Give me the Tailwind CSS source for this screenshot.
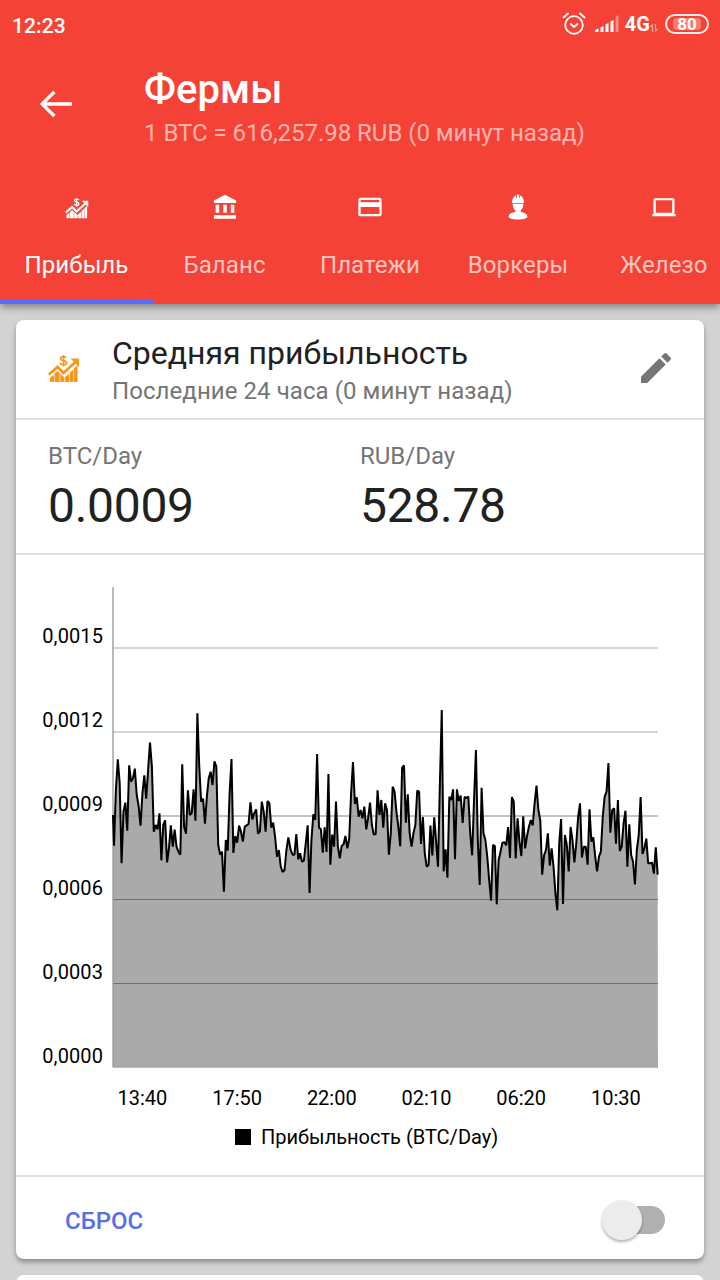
<!DOCTYPE html>
<html lang="ru">
<head>
  <meta charset="UTF-8">
  <title>Фермы</title>
  <script src="https://cdn.jsdelivr.net/npm/@tailwindcss/browser@4"></script>
</head>
<body class="w-[720px] h-[1280px] overflow-hidden bg-[#d3d3d3] font-['Roboto',sans-serif] text-[#212121]">
  <svg class="hidden">
    <symbol id="profit" viewBox="0 0 32 28">
      <path d="M1 19.5 9.5 12l6 6L27.5 7" fill="none" stroke="currentColor" stroke-width="2.8"/>
      <path d="M22.5 3.5H31V12z" fill="currentColor"/>
      <path d="M2 27v-4.500L6 19.500V27zM6.600 27V18.500l2.900-2.500L11.700 18v9zM12.300 27v-8.500l4.200 4V27zM17.100 27v-5l4.300-3.500v8.500zM22 27V17.500l3.500-3.500v13zM26 27V13.500l3.500-3.500v17z" fill="currentColor"/>
      <path d="M18.300 2.800C17.800 1.500 16.700 1.500 15.500 1.500c-1.700 0-2.900.6-2.900 1.900 0 3 6 1.300 6 4.300 0 1.500-1.300 2.200-3.100 2.200-1.600 0-2.800-.5-3.200-2M15.500 0v11.500" fill="none" stroke="currentColor" stroke-width="1.700"/>
    </symbol>
  </svg>

  <header class="relative h-[304px] bg-[#f44336] text-white shadow-[0_3px_8px_rgba(0,0,0,0.4)]">
    <!-- status bar -->
    <div class="flex h-12 items-center justify-between pl-3 pr-[11px]">
      <span class="pt-[3px] text-[21px] font-medium leading-7 tracking-[0.1px]">12:23</span>
      <div class="flex items-center">
        <svg class="mr-[8px] h-6 w-6" viewBox="0 0 24 24" fill="none" stroke="currentColor" stroke-width="1.800" stroke-linecap="round">
          <circle cx="12" cy="13" r="8.800"/>
          <path d="M8.800 12 12 15l3.500-3M1.500 5.500 6 1.500M22.500 5.500 18 1.500"/>
        </svg>
        <svg class="mr-[5px] h-[18px] w-[26px]" viewBox="0 0 26 18" fill="currentColor">
          <path d="M1 17v-2l3.500-1.500V17zM6.500 17v-4.500L9.500 11v6zM11.500 17V9.500L14.500 8v9zM16.500 17V6.500L19.500 5v12z"/>
          <path d="M21.500 17V2l3-2v17z" opacity=".4"/>
        </svg>
        <span class="text-[20px] font-bold leading-none tracking-[0.1px]">4G</span>
        <svg class="mr-[7px] mt-2 h-2 w-2" viewBox="0 0 8 8" fill="none" stroke="currentColor" stroke-width="1.200" opacity=".5">
          <path d="M2.500 8V1L.500 3M5.500 0v7l2-2"/>
        </svg>
        <div class="flex h-5 w-[44px] items-center justify-center rounded-full border-2 border-white/90">
          <span class="flex h-3 w-[28px] items-center justify-center rounded-sm bg-white/30 text-[17px] font-bold leading-none">80</span>
        </div>
      </div>
    </div>

    <!-- toolbar -->
    <div class="flex h-28 items-start pl-9">
      <svg class="mt-9 h-10 w-10" viewBox="0 0 24 24" fill="currentColor"><path d="M21.600 11H6.200l5.600-5.590L10.300 4 2.300 12l8 8 1.500-1.410L6.200 13h15.400z"/></svg>
      <div class="ml-[68px] pt-[18px]">
        <h1 class="text-[40px] font-medium leading-[48px] tracking-[0.1px]">Фермы</h1>
        <p class="pt-px text-[24px] leading-[36px] tracking-[-0.03px] text-white/60">1 BTC = 616,257.98 RUB (0 минут назад)</p>
      </div>
    </div>

    <!-- tabs -->
    <nav class="flex h-36 overflow-hidden whitespace-nowrap text-[24px] leading-8 tracking-[0.1px] text-white/70">
      <div class="flex w-[153px] shrink-0 flex-col items-center border-b-4 border-[#536dfe] pt-[33px] text-white">
        <svg class="mb-[30px] mt-[5px] h-[21px] w-6"><use href="#profit"/></svg>
        Прибыль
      </div>
      <div class="flex w-[143px] shrink-0 flex-col items-center pt-[33px]">
        <svg class="mb-7 h-7 w-7 text-white" viewBox="0 0 24 24" fill="currentColor"><path d="M4 10v7h3v-7zm6.500 0v7h3v-7zM2.500 22h19v-3h-19zm14.500-12v7h3v-7zM12 1.500 2.500 6.500v2h19v-2z"/></svg>
        Баланс
      </div>
      <div class="flex w-[148px] shrink-0 flex-col items-center pt-[33px]">
        <svg class="mb-7 h-7 w-7 text-white" viewBox="0 0 24 24" fill="currentColor"><path d="M20 4H4c-1.110 0-1.990.890-1.990 2L2 18c0 1.110.890 2 2 2h16c1.110 0 2-.890 2-2V6c0-1.110-.890-2-2-2zm0 14H4v-6h16zm0-10H4V6h16z"/></svg>
        Платежи
      </div>
      <div class="flex w-[148px] shrink-0 flex-col items-center pt-[33px]">
        <svg class="mb-7 h-7 w-7 text-white" viewBox="0 0 28 28" fill="currentColor">
          <path d="M8 10c-.2-4 1.500-6.500 4-7.500V5h.8V1.500h2.400V5h.8V2.500c2.500 1 4.200 3.500 4 7.500zM8.600 10.800h10.800c0 3.500-1.400 5.500-2.600 6.500V19c4 .6 6.600 2.200 6.600 4.800 0 1.400-4 2.700-9.400 2.700s-9.400-1.300-9.400-2.700c0-2.600 2.600-4.200 6.600-4.800v-1.700c-1.200-1-2.600-3-2.600-6.500z"/>
        </svg>
        Воркеры
      </div>
      <div class="flex w-[144px] shrink-0 flex-col items-center pt-[33px]">
        <svg class="mb-7 h-7 w-7 text-white" viewBox="0 0 24 24" fill="currentColor"><path d="M20 18c.6 0 1-.4 1-1V6c0-.9-.6-1.500-1.500-1.500h-15C3.600 4.500 3 5.100 3 6v11c0 .6.400 1 1 1v.100H2V20h20v-1.900h-2zM5 6.300h14V17H5z"/></svg>
        Железо
      </div>
    </nav>
  </header>

  <main class="flex h-[976px] flex-col gap-4 overflow-hidden px-4 pt-4">
    <section class="h-[939px] shrink-0 rounded-lg bg-white shadow-[0_3px_5px_rgba(0,0,0,0.35)]">
      <div class="flex h-[100px] items-start border-b-2 border-[#e0e0e0] pl-8 pr-7">
        <svg class="mt-[35px] h-7 w-8 text-[#f7981c]"><use href="#profit"/></svg>
        <div class="ml-8 flex-1 pt-[13px]">
          <h2 class="text-[32px] leading-10">Средняя прибыльность</h2>
          <p class="text-[24px] leading-9 tracking-[0.07px] text-[#757575]">Последние 24 часа (0 минут назад)</p>
        </div>
        <svg class="mt-7 h-10 w-10 text-[#757575]" viewBox="0 0 24 24" fill="currentColor"><path d="M3 17.250V21h3.750L17.810 9.940l-3.750-3.750zM20.710 7.040a1 1 0 0 0 0-1.410l-2.340-2.340a1 1 0 0 0-1.410 0l-1.830 1.830 3.750 3.750z"/></svg>
      </div>

      <div class="grid h-[135px] grid-cols-[312px_1fr] border-b-2 border-[#e0e0e0] pl-8 pt-5">
        <div>
          <p class="text-[24px] leading-8 text-[#757575]">BTC/Day</p>
          <p class="pt-px text-[48px] leading-[66px] tracking-[-0.3px]">0.0009</p>
        </div>
        <div>
          <p class="text-[24px] leading-8 text-[#757575]">RUB/Day</p>
          <p class="pt-px text-[48px] leading-[66px] tracking-[-0.3px]">528.78</p>
        </div>
      </div>

      <div class="h-[622px] border-b-2 border-[#e0e0e0] pt-8 text-black">
        <div class="flex">
          <div class="flex w-[97px] flex-col pr-2.5 pt-[37px] text-right text-[20px] leading-6 tracking-[0.1px]">
            <span class="h-[84px]">0,0015</span>
            <span class="h-[84px]">0,0012</span>
            <span class="h-[84px]">0,0009</span>
            <span class="h-[84px]">0,0006</span>
            <span class="h-[84px]">0,0003</span>
            <span>0,0000</span>
          </div>
          <svg class="h-[481px] w-[546px] overflow-visible" viewBox="0 -339 1638 1443">
            <path d="M0-156H1635M0 96H1635M0 348H1635" stroke="#c8c8c8" stroke-width="5"/>
            <polygon id="area" fill="#aaa"/>
            <path d="M0 348H1635" stroke="#707070" stroke-width="3" opacity=".35"/>
            <path d="M0 598.500H1635M0 850.500H1635" stroke="#707070" stroke-width="3"/>
            <path d="M0-339V1102" stroke="#999" stroke-width="4"/>
            <path d="M0 1101.500H1635" stroke="#999" stroke-width="3"/>
            <polyline id="line" fill="none" stroke="#000" stroke-width="6" stroke-linejoin="bevel"/>
          </svg>
        </div>
        <div class="flex gap-[44.700px] pl-[101.500px] pt-[18px] text-[20px] leading-6">
          <span class="w-[50px]">13:40</span>
          <span class="w-[50px]">17:50</span>
          <span class="w-[50px]">22:00</span>
          <span class="w-[50px]">02:10</span>
          <span class="w-[50px]">06:20</span>
          <span class="w-[50px]">10:30</span>
        </div>
        <div class="mt-[15px] flex items-center pl-[219px] text-[20px] leading-6">
          <span class="mr-2.5 h-4 w-4 bg-black"></span>Прибыльность (BTC/Day)
        </div>
      </div>

      <div class="flex h-[82px] items-center justify-between pl-[49px] pr-[39px] pt-1.5">
        <button class="text-[24px] font-medium text-[#5a6ee6]">СБРОС</button>
        <div class="relative mb-0.5 h-7 w-[56px] rounded-full bg-[#b0b0b0]">
          <span class="absolute -left-[7px] -top-1.5 h-10 w-10 rounded-full bg-[#ececec] shadow-[0_2px_3px_rgba(0,0,0,0.3)]"></span>
        </div>
      </div>
    </section>
    <section class="h-20 shrink-0 rounded-lg bg-white"></section>
  </main>

  <script>
    // chart samples: [first x, last x, y values]
    const parts = [
      [3, 526, [437,270,178,250,490,335,308,392,196,245,235,206,285,318,377,280,226,296,210,128,200,395,375,388,340,481,375,361,487,445,376,440,389,440,455,464,193,380,401,271,345,340,268,362,40,200,305,296,371,290,235,215,255,184,200,435,464,455,575,420,452,280,177,459,408,428,377,395,425,380,376,372,307,358,340,328,401,395,305,335,395,303,310,383,368,410,470,450,500,516,510,450,412]],
      [533, 1043, [450,464,464,402,478,460,485,482,430,376,579,420,343,360,162,383,388,458,382,456,222,494,404,440,305,440,475,438,433,408,445,415,280,186,312,292,350,330,355,320,388,355,308,375,404,402,271,345,300,383,310,330,464,400,260,275,335,380,439,203,196,368,283,400,440,400,375,272,275,432,351,460,500,495,377,466,352,425,500,250,30,514,448,533,290,300,268,478,268,303,287]],
      [1049, 1634, [369,291,294,290,400,466,300,150,420,555,263,400,420,470,540,602,435,438,613,480,455,428,427,436,381,474,291,305,475,355,425,468,349,445,408,380,360,376,310,257,330,362,524,466,450,400,497,445,500,580,631,430,357,612,405,435,514,381,420,487,430,350,310,473,440,440,494,328,425,412,470,514,470,455,350,290,275,189,398,330,325,431,300,453,440,370,332,500,373,465,485,553,450,405,291,462,445,416,490,490,487,521,442,524]]
    ];

    const points = ["0,345"];
    for (const [from, to, values] of parts) {
      values.forEach((y, i) => {
        const x = from + (to - from) * i / (values.length - 1);
        points.push(`${x.toFixed(1)},${y}`);
      });
    }
    document.getElementById("line").setAttribute("points", points.join(" "));
    document.getElementById("area").setAttribute("points", `0,1101 ${points.join(" ")} 1635,1101`);
  </script>
</body>
</html>
